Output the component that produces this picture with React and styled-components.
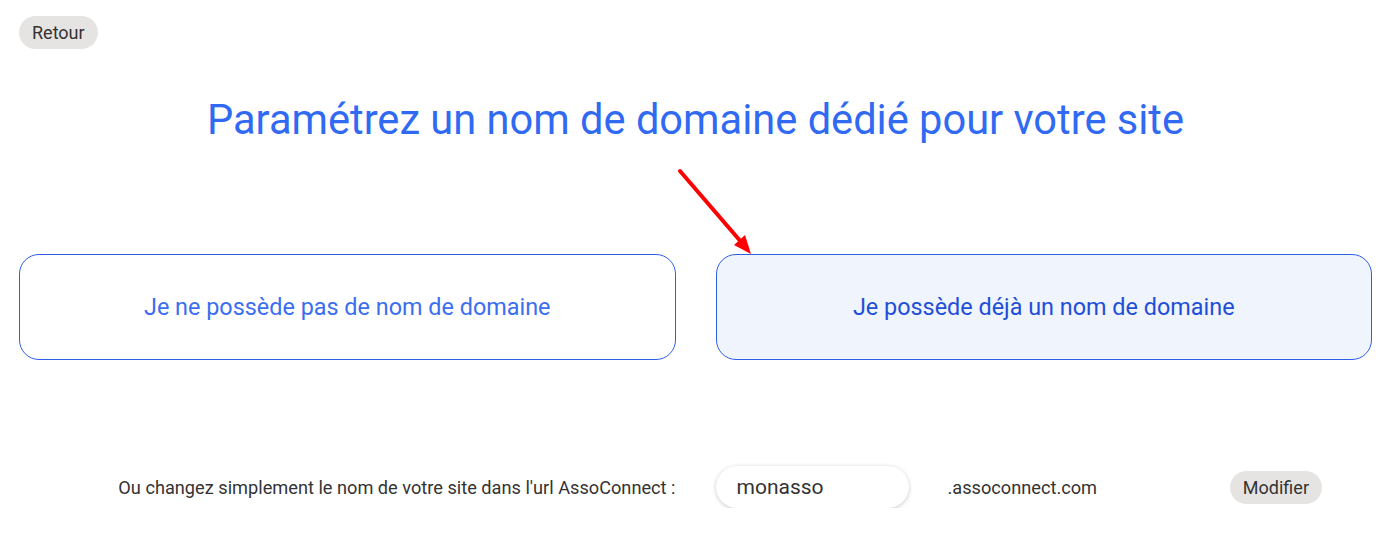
import styled, { createGlobalStyle } from "styled-components";

const GlobalStyle = createGlobalStyle`
  body {
    margin: 0;
    background: #ffffff;
    font-family: Roboto, "Liberation Sans", sans-serif;
  }
`;

const Page = styled.div`
  position: relative;
  padding: 16px 19px 0;
`;

const PillButton = styled.button`
  height: 33px;
  padding: 0 13px;
  border: none;
  border-radius: 17px;
  background: #e6e4e3;
  color: #333333;
  font-family: Roboto, "Liberation Sans", sans-serif;
  font-size: 18px;
  cursor: pointer;
`;

const Title = styled.h1`
  margin: 46px 0 0;
  text-align: center;
  font-size: 41.6px;
  line-height: 49px;
  font-weight: 400;
  color: #316af2;
`;

const Choices = styled.div`
  display: grid;
  grid-template-columns: 1fr 1fr;
  gap: 40px;
  margin-top: 110px;
`;

const Choice = styled.button`
  height: 106px;
  border: 1px solid #2d5fe6;
  border-radius: 20px;
  background: ${(p) => (p.$active ? "#eff4fd" : "#ffffff")};
  color: ${(p) => (p.$active ? "#1f4fd8" : "#3b6ef0")};
  font-family: Roboto, "Liberation Sans", sans-serif;
  font-size: 23.4px;
  cursor: pointer;
`;

const UrlRow = styled.div`
  display: grid;
  grid-template-columns: 1fr 1fr;
  gap: 40px;
  margin-top: 106px;
  align-items: center;
`;

const UrlLabel = styled.div`
  text-align: right;
  font-size: 18.2px;
  color: #333333;
`;

const UrlControls = styled.div`
  display: flex;
  align-items: center;
  padding-right: 50px;
`;

const NameInput = styled.input`
  width: 193px;
  height: 42px;
  box-sizing: border-box;
  padding: 0 21px;
  border: none;
  border-radius: 21px;
  background: #ffffff;
  box-shadow: 0 1px 4px rgba(0, 0, 0, 0.22);
  font-family: Roboto, "Liberation Sans", sans-serif;
  font-size: 21px;
  color: #333333;
  outline: none;
`;

const Suffix = styled.span`
  margin-left: 39px;
  font-size: 18.2px;
  color: #333333;
`;

const Push = styled.div`
  margin-left: auto;
`;

const Arrow = styled.svg`
  position: absolute;
  left: 670px;
  top: 160px;
`;

export default function App() {
  return (
    <>
      <GlobalStyle />
      <Page>
        <PillButton>Retour</PillButton>
        <Title>Paramétrez un nom de domaine dédié pour votre site</Title>
        <Choices>
          <Choice>Je ne possède pas de nom de domaine</Choice>
          <Choice $active>Je possède déjà un nom de domaine</Choice>
        </Choices>
        <UrlRow>
          <UrlLabel>
            Ou changez simplement le nom de votre site dans l'url AssoConnect :
          </UrlLabel>
          <UrlControls>
            <NameInput defaultValue="monasso" />
            <Suffix>.assoconnect.com</Suffix>
            <Push>
              <PillButton>Modifier</PillButton>
            </Push>
          </UrlControls>
        </UrlRow>
        <Arrow width="100" height="110" viewBox="0 0 100 110">
          <line
            x1="10"
            y1="11"
            x2="72"
            y2="83"
            stroke="#ff0000"
            strokeWidth="4"
            strokeLinecap="round"
          />
          <polygon points="81,94 64,85 75,75" fill="#ff0000" />
        </Arrow>
      </Page>
    </>
  );
}
